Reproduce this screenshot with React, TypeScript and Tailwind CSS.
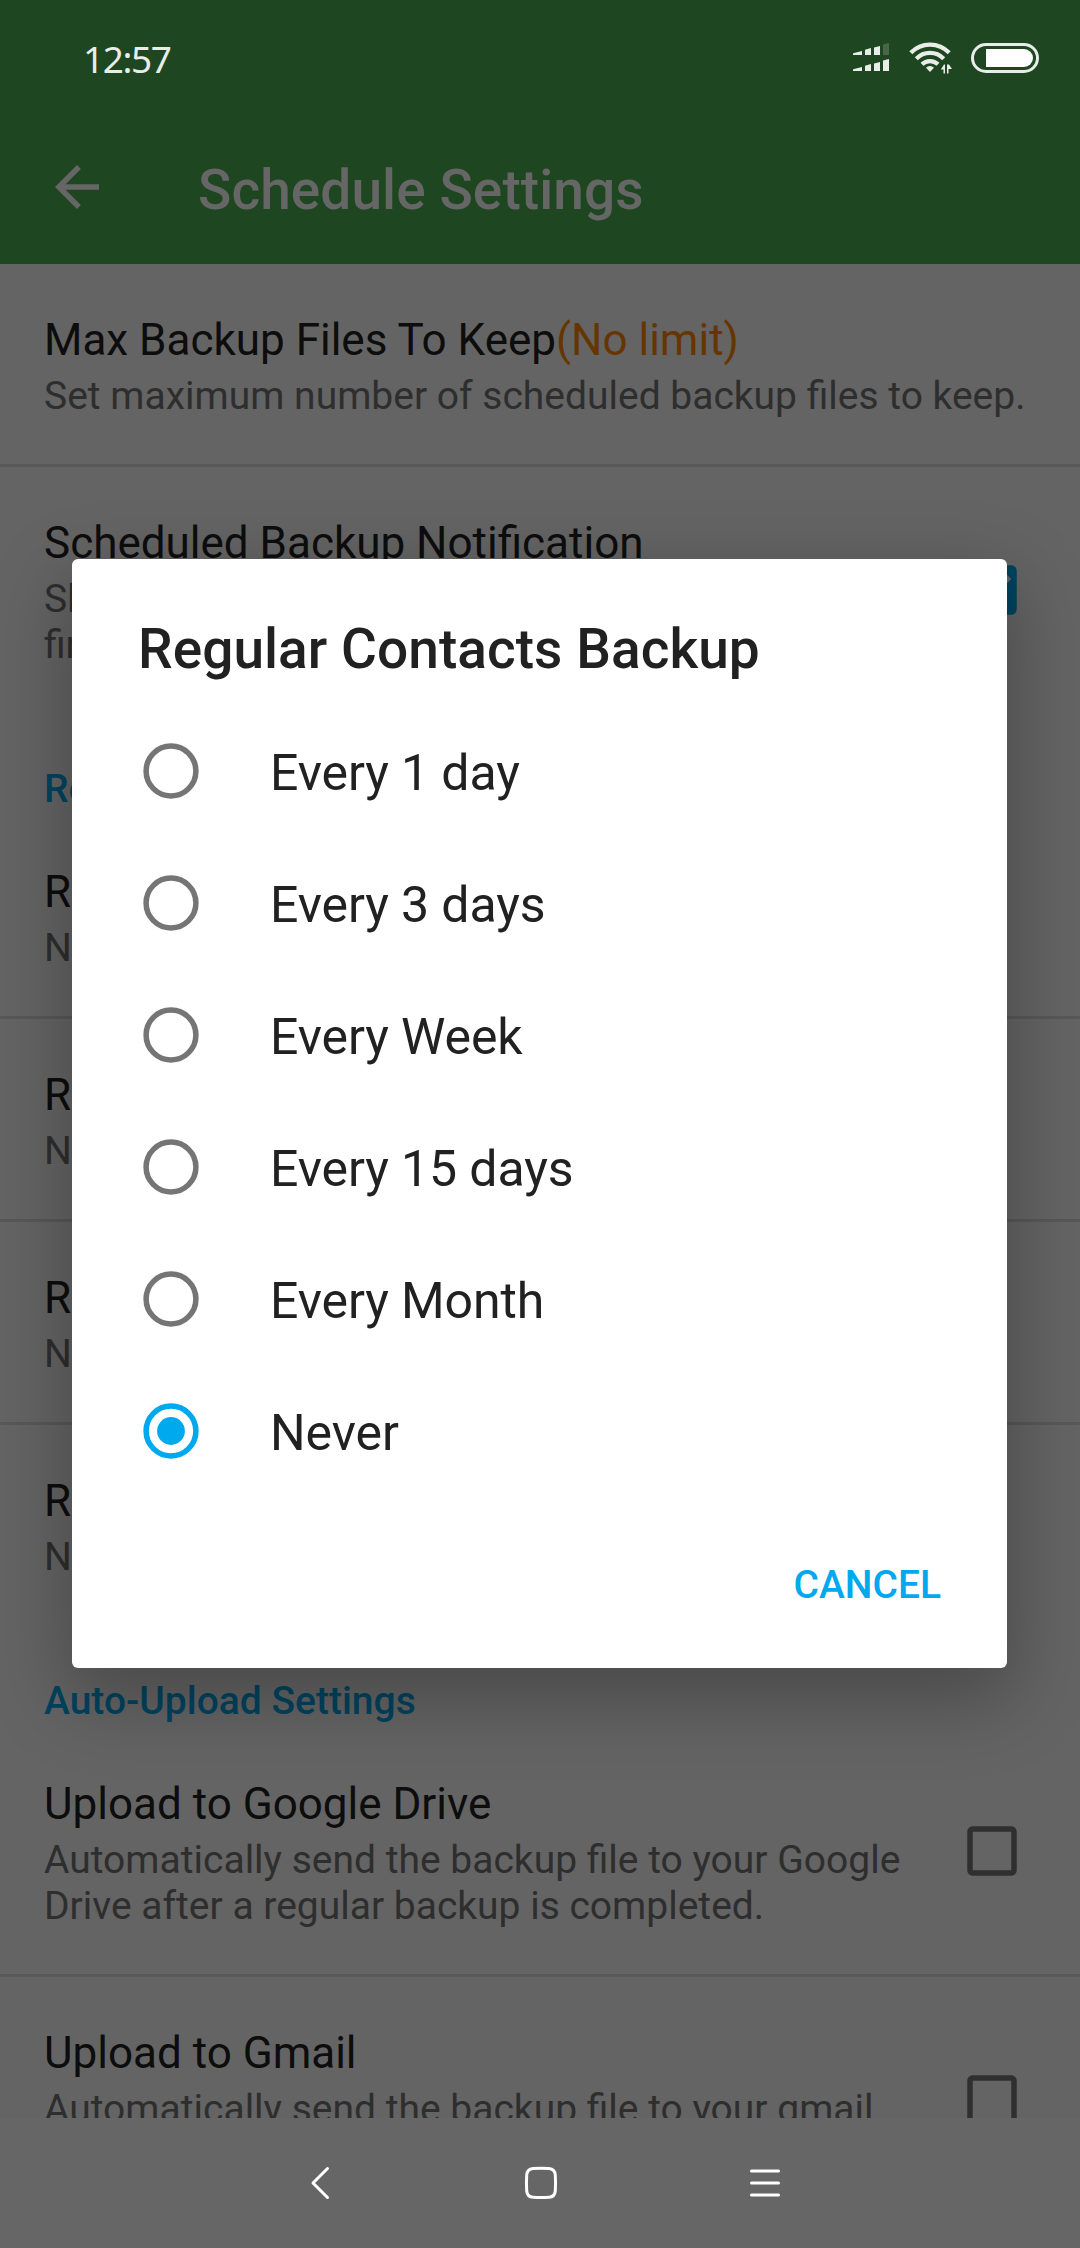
import React, { useState } from 'react';

interface SettingItem {
  title: string;
  value?: string;
  summary: string;
  lines?: number;
  checked?: boolean;
}

const generalItems: SettingItem[] = [
  { title: 'Max Backup Files To Keep', value: '(No limit)', summary: 'Set maximum number of scheduled backup files to keep.' },
  { title: 'Scheduled Backup Notification', summary: 'Show notification when a regular backup is finished.', lines: 2, checked: true },
];

const regularItems: SettingItem[] = [
  { title: 'Regular Apps Backup', summary: 'Never' },
  { title: 'Regular Contacts Backup', summary: 'Never' },
  { title: 'Regular Messages Backup', summary: 'Never' },
  { title: 'Regular Call Logs Backup', summary: 'Never' },
];

const uploadItems: SettingItem[] = [
  { title: 'Upload to Google Drive', summary: 'Automatically send the backup file to your Google Drive after a regular backup is completed.', lines: 2, checked: false },
  { title: 'Upload to Gmail', summary: 'Automatically send the backup file to your gmail after a regular backup is completed.', lines: 2, checked: false },
];

const options = ['Every 1 day', 'Every 3 days', 'Every Week', 'Every 15 days', 'Every Month', 'Never'];

const StatusBar: React.FC = () => (
  <div className="flex h-[110px] items-start justify-between pl-[83px] pr-[41px]">
    <span className="mt-[34px] font-['Noto_Sans'] text-[37px] leading-[50px] tracking-[-1.4px] text-[#e9ede9]">12:57</span>
    <div className="mt-[42px] flex h-8 items-start">
      {/* Signal, two SIMs */}
      <svg className="mr-5 h-8 w-9" viewBox="0 0 36 32" fill="#e9ede9">
        <path d="M0 13v-1.800L9 9v4zM12 13V7.800L18 6v7zM21 13V5.500L27 4v9zM0 29v-1.800L9 25v4zM12 29v-5.200L18 22v7zM21 29v-7.500L27 20v9zM30 29V18.500L36 17v12z" />
        <path d="M30 13V2.500L36 1v12z" opacity="0.2" />
      </svg>
      {/* Wifi */}
      <svg className="mr-[18px] h-8 w-[44px]" viewBox="0 0 44 32" fill="none" stroke="#e9ede9">
        <path d="M1.800 10.800a26.500 26.500 0 0 1 38.400 0" strokeWidth="4.200" />
        <path d="M7.300 16.800a19 19 0 0 1 27.400 0" strokeWidth="4.200" />
        <path d="M13 22.300a11.500 11.500 0 0 1 16 0" strokeWidth="4.200" />
        <path d="M21 30l-4-4.200a5.500 5.500 0 0 1 8 0z" fill="#e9ede9" stroke="none" />
        <path d="M36 31.500V22.500h-1l-3.200 5H34.500v4zM38 22.500v9h1.500v-4.500h3.500l-3-4.500z" fill="#e9ede9" stroke="none" />
      </svg>
      {/* Battery */}
      <div className="mt-px flex h-[30px] w-[68px] justify-end rounded-full border-[3px] border-[#e9ede9] p-[3px]">
        <div className="h-[18px] w-[47px] rounded-l-[2px] rounded-r-full bg-white" />
      </div>
    </div>
  </div>
);

const CheckBox: React.FC<{ checked: boolean }> = ({ checked }) => (
  <svg className="size-[66px] shrink-0" viewBox="0 0 24 24" fill={checked ? '#00a9ee' : '#757575'}>
    {checked ? (
      <path d="M19 3H5c-1.110 0-2 .9-2 2v14c0 1.100.89 2 2 2h14c1.110 0 2-.9 2-2V5c0-1.100-.89-2-2-2zm-9 14l-5-5 1.410-1.410L10 14.170l7.590-7.590L19 8l-9 9z" />
    ) : (
      <path d="M19 5v14H5V5h14m0-2H5c-1.100 0-2 .9-2 2v14c0 1.100.9 2 2 2h14c1.100 0 2-.9 2-2V5c0-1.100-.9-2-2-2z" />
    )}
  </svg>
);

const SettingRow: React.FC<{ item: SettingItem }> = ({ item }) => (
  <div className={`flex items-center pl-11 pr-[55px] ${item.lines === 2 ? 'h-[246px]' : 'h-[200px]'}`}>
    <div className="flex-1 pt-[5px]">
      <p className="whitespace-nowrap text-[44px] leading-[52px] text-[#212121]">
        {item.title}
        {item.value && <span className="text-[#ff8800]">{item.value}</span>}
      </p>
      <p className={`mt-[7px] text-[39px] leading-[46px] text-[#737373] ${item.checked === undefined ? 'whitespace-nowrap' : 'w-[870px]'}`}>
        {item.summary}
      </p>
    </div>
    {item.checked !== undefined && <CheckBox checked={item.checked} />}
  </div>
);

const Section: React.FC<{ title?: string; items: SettingItem[] }> = ({ title, items }) => (
  <section>
    {title && <h2 className="h-[103px] pl-11 pt-[53px] text-[39px] font-medium leading-[46px] text-[#00a9ee]">{title}</h2>}
    {items.map((item, i) => (
      <React.Fragment key={item.title}>
        {i > 0 && <div className="h-[3px] bg-[#dcdcdc]" />}
        <SettingRow item={item} />
      </React.Fragment>
    ))}
  </section>
);

const BackupDialog: React.FC = () => {
  const [selected, setSelected] = useState('Never');

  return (
    <div className="absolute left-[72px] top-[559px] flex h-[1109px] w-[935px] flex-col rounded-[6px] bg-white shadow-[0_26px_76px_6px_rgba(0,0,0,0.27)]">
      <h2 className="h-[146px] pl-[66px] pt-[58px] text-[55px] font-medium leading-[65px] tracking-[0.05px] text-[#212121]">Regular Contacts Backup</h2>
      {options.map(option => (
        <button key={option} className="flex h-[132px] items-center pl-[71px]" onClick={() => setSelected(option)}>
          <svg className="size-[56px]" viewBox="0 0 56 56" fill="none" stroke={option === selected ? '#00a9ee' : '#757575'} strokeWidth="5.500">
            <circle cx="28" cy="28" r="24.900" />
            {option === selected && <circle cx="28" cy="28" r="13.900" fill="#00a9ee" stroke="none" />}
          </svg>
          <span className="ml-[71px] pt-1 text-[50px] leading-[58px] tracking-[-0.1px] text-[#212121]">{option}</span>
        </button>
      ))}
      <div className="flex justify-end pr-[66px] pt-[65px]">
        <button className="text-[39px] font-medium leading-[46px] text-[#00a9ee]">CANCEL</button>
      </div>
    </div>
  );
};

const NavigationBar: React.FC = () => (
  <div className="flex h-[130px] shrink-0 items-center justify-between bg-[#666666] pb-[1px] pl-[310px] pr-[299px]">
    <svg className="h-[34px] w-[22px]" viewBox="0 0 22 34" fill="none" stroke="white" strokeWidth="3" strokeLinecap="round" strokeLinejoin="round">
      <path d="M17.500 2.500L3 17l14.500 14.500" />
    </svg>
    <svg className="h-[34px] w-[34px]" viewBox="0 0 34 34" fill="none" stroke="white" strokeWidth="3">
      <path d="M9 2.500q8-.6 16 0 5.800.5 6.300 6.500.5 8 0 16-.5 5.800-6.300 6.300-8 .6-16 0-5.800-.5-6.300-6.300-.5-8 0-16Q3.200 3 9 2.500z" />
    </svg>
    <svg className="h-[34px] w-8" viewBox="0 0 32 34" stroke="white" strokeWidth="3" strokeLinecap="round">
      <path d="M2.500 5h27M2.500 17h27M2.500 29h27" />
    </svg>
  </div>
);

export default function App() {
  return (
    <div className="relative flex h-[2248px] w-[1080px] flex-col overflow-hidden bg-[#646464] font-['Roboto',sans-serif]">
      <header className="shrink-0 bg-[#1e4620]">
        <StatusBar />
        <div className="flex h-[154px] items-center pl-11">
          <svg className="size-[66px]" viewBox="0 0 24 24" fill="#666666">
            <path d="M20 11H7.830l5.590-5.590L12 4l-8 8 8 8 1.410-1.410L7.830 13H20v-2z" />
          </svg>
          <h1 className="ml-[88px] pt-[7px] text-[55px] font-medium leading-[65px] tracking-[0.08px] text-[#666666]">Schedule Settings</h1>
        </div>
      </header>
      <main className="relative min-h-0 flex-1 overflow-hidden bg-[#fafafa]">
        <Section items={generalItems} />
        <Section title="Regular Backup Settings" items={regularItems} />
        <Section title="Auto-Upload Settings" items={uploadItems} />
        {/* Dim layer behind the dialog */}
        <div className="absolute inset-0 bg-black/60" />
      </main>
      <NavigationBar />
      <BackupDialog />
    </div>
  );
}
